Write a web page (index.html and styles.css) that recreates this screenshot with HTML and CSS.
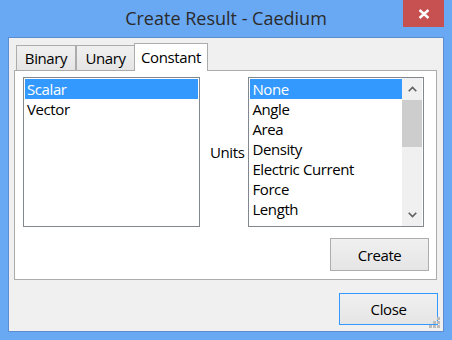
FILE: index.html
```html
<!DOCTYPE html>
<html lang="en">
<head>
  <meta charset="UTF-8" />
  <title>Create Result - Caedium</title>
  <link rel="stylesheet" href="styles.css">
</head>
<body>
  <div class="window">
    <div class="titlebar">
      <span></span>
      <div class="title">Create Result - Caedium</div>
      <button class="close-x" aria-label="Close">
        <svg width="12" height="10" viewBox="0 0 12 10">
          <path d="M1.5 1 L10.5 9 M10.5 1 L1.5 9" stroke="#fff" stroke-width="2.4" fill="none"/>
        </svg>
      </button>
    </div>

    <div class="client">
      <div class="tabs">
        <div class="tab tab-binary">Binary</div>
        <div class="tab tab-unary">Unary</div>
        <div class="tab tab-constant active">Constant</div>
      </div>

      <div class="panel">
        <div class="fields">
          <div class="listbox kinds">
            <div class="items">
              <div class="item selected">Scalar</div>
              <div class="item">Vector</div>
            </div>
          </div>

          <div class="label">Units</div>

          <div class="listbox units">
            <div class="items">
              <div class="item selected">None</div>
              <div class="item">Angle</div>
              <div class="item">Area</div>
              <div class="item">Density</div>
              <div class="item">Electric Current</div>
              <div class="item">Force</div>
              <div class="item">Length</div>
              <div class="item">Luminous Intensity</div>
            </div>
            <div class="scrollbar">
              <div class="sb-btn">
                <svg width="9" height="6" viewBox="0 0 9 6"><path d="M0.7 5.3 L4.5 1.5 L8.3 5.3" stroke="#606060" stroke-width="1.6" fill="none"/></svg>
              </div>
              <div class="sb-track"><div class="sb-thumb"></div></div>
              <div class="sb-btn">
                <svg width="9" height="6" viewBox="0 0 9 6"><path d="M0.7 0.7 L4.5 4.5 L8.3 0.7" stroke="#606060" stroke-width="1.6" fill="none"/></svg>
              </div>
            </div>
          </div>
        </div>

        <div class="actions">
          <button class="btn">Create</button>
        </div>
      </div>

      <div class="footer">
        <button class="btn default">Close</button>
      </div>

      <svg class="grip" width="11" height="11" viewBox="0 0 11 11">
        <rect x="8" y="0" width="3" height="3" fill="#bcbcbc"/>
        <rect x="4" y="4" width="3" height="3" fill="#bcbcbc"/>
        <rect x="8" y="4" width="3" height="3" fill="#bcbcbc"/>
        <rect x="0" y="8" width="3" height="3" fill="#bcbcbc"/>
        <rect x="4" y="8" width="3" height="3" fill="#bcbcbc"/>
        <rect x="8" y="8" width="3" height="3" fill="#bcbcbc"/>
      </svg>
    </div>
  </div>
</body>
</html>
```

FILE: styles.css
```css
* {
  margin: 0;
  padding: 0;
  box-sizing: border-box;
  font-family: 'Open Sans', 'Noto Sans', sans-serif;
}
body {
  background: #69a8f3;
}
.window {
  width: 452px;
  height: 340px;
  background: #69a8f3;
  padding: 0 8px 8px;
  display: flex;
  flex-direction: column;
}
.titlebar {
  height: 37px;
  display: grid;
  grid-template-columns: 1fr auto 1fr;
  align-items: start;
}
.title {
  font-size: 18px;
  line-height: 37px;
  color: #2b2b2b;
  white-space: nowrap;
}
.close-x {
  justify-self: end;
  width: 41px;
  height: 27px;
  border: none;
  background: #c75050;
  display: flex;
  align-items: center;
  justify-content: center;
}
.client {
  flex: 1;
  position: relative;
  background: #f0f0f0;
  border: 1px solid #5b8dd0;
  padding: 5px 6px 0 5px;
  display: flex;
  flex-direction: column;
}
.tabs {
  display: flex;
  align-items: flex-end;
  padding-left: 2px;
}
.tab {
  height: 25px;
  border: 1px solid #acacac;
  border-bottom: none;
  background: linear-gradient(#f0f0f0, #e5e5e5);
  font-size: 15px;
  line-height: 24px;
  letter-spacing: -0.4px;
  text-align: center;
  color: #000;
}
.tab-binary {
  width: 60px;
}
.tab-unary {
  width: 59px;
}
.tab.active {
  width: 74px;
  height: 28px;
  margin-left: -1px;
  margin-bottom: -1px;
  line-height: 26px;
  background: #fff;
  position: relative;
  z-index: 1;
}
.panel {
  background: #fff;
  border: 1px solid #acacac;
  padding: 6px 7px 8px 8px;
}
.fields {
  display: flex;
  align-items: center;
}
.listbox {
  height: 150px;
  border: 1px solid #828790;
  background: #fff;
  padding: 1px;
}
.kinds {
  width: 177px;
}
.units {
  width: 176px;
  display: flex;
}
.items {
  flex: 1;
  overflow: hidden;
}
.item {
  height: 20px;
  line-height: 20px;
  padding: 0 2px;
  font-size: 15px;
  letter-spacing: -0.4px;
  color: #000;
  white-space: nowrap;
}
.item.selected {
  background: #3399ff;
  color: #fff;
}
.label {
  font-size: 15px;
  letter-spacing: -0.4px;
  color: #000;
  margin: 0 4px 0 10px;
}
.scrollbar {
  width: 20px;
  margin: -1px 0;
  background: #f0f0f0;
  display: flex;
  flex-direction: column;
}
.sb-btn {
  height: 22px;
  display: flex;
  align-items: center;
  justify-content: center;
}
.sb-track {
  flex: 1;
}
.sb-thumb {
  height: 47px;
  background: #cdcdcd;
}
.actions {
  display: flex;
  justify-content: flex-end;
  margin-top: 11px;
}
.btn {
  width: 99px;
  height: 33px;
  border: 1px solid #adadad;
  background: linear-gradient(#f0f0f0, #e5e5e5);
  font-size: 15px;
  letter-spacing: -0.4px;
  color: #000;
}
.footer {
  display: flex;
  justify-content: flex-end;
  margin-top: 13px;
  margin-right: -1px;
}
.btn.default {
  height: 32px;
  border-color: #3399ff;
}
.grip {
  position: absolute;
  right: 3px;
  bottom: 3px;
}
```
